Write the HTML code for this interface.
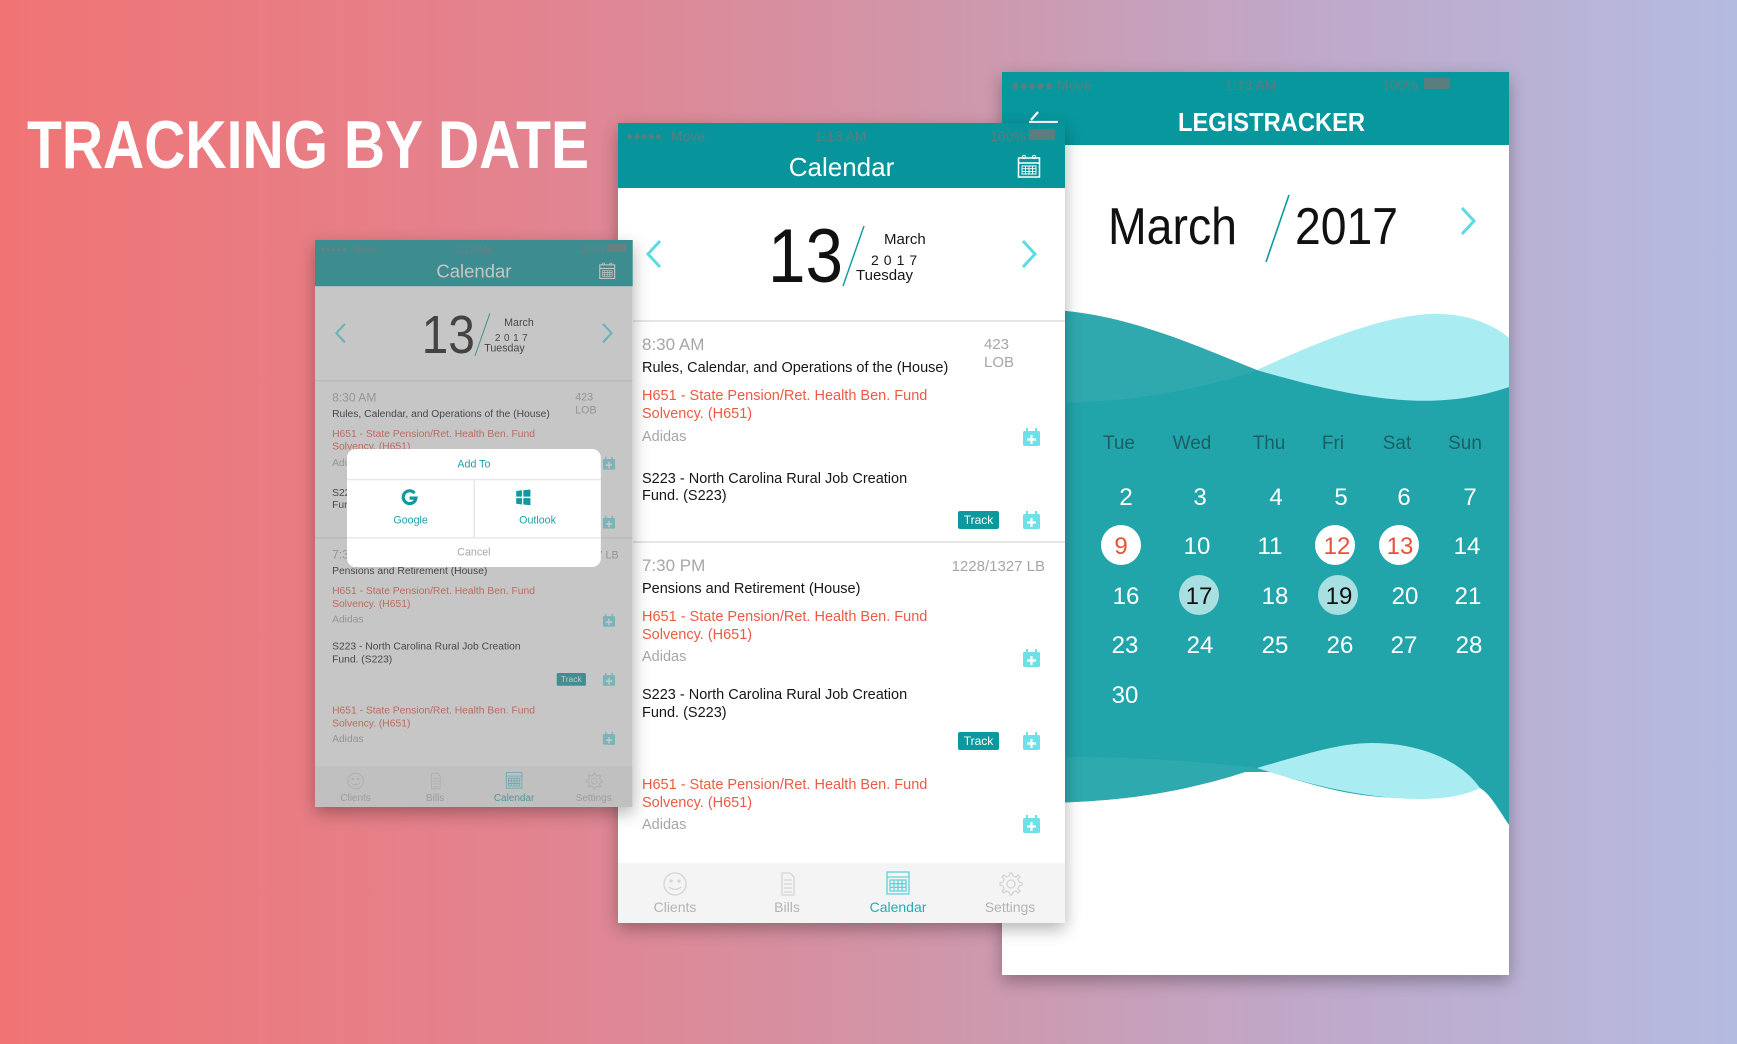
<!DOCTYPE html>
<html><head><meta charset="utf-8"><style>
*{margin:0;padding:0;box-sizing:border-box}
body{width:1737px;height:1044px;overflow:hidden;position:relative;font-family:"Liberation Sans",sans-serif;background:linear-gradient(90deg,#f07474 0%,#e3838f 30%,#cf97ab 55%,#c0a8c9 75%,#b4bbe0 100%)}
.abs{position:absolute}
.ph{position:absolute;width:447px;height:800px;background:#fff;overflow:hidden}
.sb{position:absolute;left:0;top:0;width:100%;height:24px;font-size:14px;color:#5a7e80;white-space:nowrap}
.sb span{position:absolute;top:5px}
.t{position:absolute;white-space:nowrap;font-size:14.5px;color:#161616}
.g{color:#a6a6a6}
.r{color:#ec5a44}
.trk{position:absolute;width:41px;height:18px;background:#0b999f;border-radius:2px;color:#fff;font-size:12px;text-align:center;line-height:18px}
.tab{position:absolute;top:776px;font-size:14px;color:#b4b4b4;text-align:center;width:100px}
</style></head><body>

<svg class="abs" style="left:0;top:0" width="640" height="200"><text x="27" y="168" font-family="Liberation Sans" font-weight="bold" font-size="68" fill="#fff" textLength="562" lengthAdjust="spacingAndGlyphs">TRACKING BY DATE</text></svg>

<!-- RIGHT PHONE -->
<div class="abs" style="left:1002px;top:72px;width:507px;height:903px;background:#fff;box-shadow:0 6px 16px rgba(0,0,0,.3);overflow:hidden">
 <div class="abs" style="left:0;top:0;width:507px;height:73px;background:#07979d"></div>
 <div class="sb"><span style="left:9px">●●●●● Move</span><span style="left:223px">1:13 AM</span><span style="left:380px">100%</span><span style="left:422px;top:6px;width:26px;height:11px;background:#5a7e80;border-radius:2px"></span></div>
 <svg class="abs" style="left:26px;top:38px" width="32" height="16"><path d="M10 2 L3 10 M1 12 H30" stroke="#fff" stroke-width="2.2" fill="none"/></svg>
 <svg class="abs" style="left:0;top:0" width="507" height="903">
  <text x="176" y="59" font-family="Liberation Sans" font-weight="bold" font-size="26" fill="#fff" textLength="187" lengthAdjust="spacingAndGlyphs">LEGISTRACKER</text>
  <text x="106" y="172" font-family="Liberation Sans" font-size="52" fill="#111" textLength="129" lengthAdjust="spacingAndGlyphs">March</text>
  <text x="293" y="172" font-family="Liberation Sans" font-size="52" fill="#111" textLength="103" lengthAdjust="spacingAndGlyphs">2017</text>
  <line x1="287" y1="123" x2="264" y2="190" stroke="#0a9aa0" stroke-width="1.6"/>
  <path d="M460 136 L472 149 L460 162" stroke="#5cdbe3" stroke-width="3" fill="none"/>
  <path d="M0 238 C100 230 180 268 255 298 C340 330 420 348 507 345 L507 700 L0 700Z" fill="#2fa9ae"/>
  <path d="M0 330 C110 336 200 318 255 298 C340 322 430 338 507 315 L507 753 C495 735 488 722 478 716 C380 740 320 715 255 696 C200 715 120 735 0 730Z" fill="#21a5aa"/>
  <path d="M255 298 C320 268 390 240 440 242 C470 243 495 255 507 266 L507 315 C440 338 370 332 255 298Z" fill="#a9ecf1"/>
  <path d="M0 688 C100 680 200 690 255 696 C200 715 120 735 0 730Z" fill="#2ea9ae"/>
  <path d="M255 696 C310 680 340 671 370 671 C420 671 460 690 478 716 C440 735 360 730 255 696Z" fill="#a9ecf1"/>
  <g font-family="Liberation Sans" font-size="19" fill="#1b5f63" text-anchor="middle">
   <text x="117" y="377">Tue</text><text x="190" y="377">Wed</text><text x="267" y="377">Thu</text><text x="331" y="377">Fri</text><text x="395" y="377">Sat</text><text x="463" y="377">Sun</text>
  </g>
  <circle cx="119" cy="473" r="20" fill="#fff"/><circle cx="333" cy="473" r="20" fill="#fff"/><circle cx="397" cy="473" r="20" fill="#fff"/>
  <circle cx="197" cy="523" r="20" fill="#a8dfe0"/><circle cx="336" cy="523" r="20" fill="#a8dfe0"/>
  <g font-family="Liberation Sans" font-size="24" fill="#fff" text-anchor="middle">
   <text x="124" y="433">2</text><text x="198" y="433">3</text><text x="274" y="433">4</text><text x="339" y="433">5</text><text x="402" y="433">6</text><text x="468" y="433">7</text>
   <text x="119" y="482" fill="#e8513a">9</text><text x="195" y="482">10</text><text x="268" y="482">11</text><text x="335" y="482" fill="#e8513a">12</text><text x="398" y="482" fill="#e8513a">13</text><text x="465" y="482">14</text>
   <text x="124" y="532">16</text><text x="197" y="532" fill="#111">17</text><text x="273" y="532">18</text><text x="337" y="532" fill="#111">19</text><text x="403" y="532">20</text><text x="466" y="532">21</text>
   <text x="123" y="581">23</text><text x="198" y="581">24</text><text x="273" y="581">25</text><text x="338" y="581">26</text><text x="402" y="581">27</text><text x="467" y="581">28</text>
   <text x="123" y="631">30</text>
  </g>
 </svg>
</div>

<!-- MIDDLE PHONE -->
<div class="ph" id="mid" style="left:618px;top:123px;box-shadow:0 6px 16px rgba(0,0,0,.3)">
 <div class="abs" style="left:0;top:0;width:447px;height:65px;background:#07959b"></div>
 <div class="sb"><span style="left:8px;font-size:12px;top:6px">●●●●●</span><span style="left:53px">Move</span><span style="left:197px">1:13 AM</span><span style="left:372px">100%</span><span style="left:411px;top:6px;width:26px;height:11px;background:#5a7e80;border-radius:2px"></span></div>
 <div class="abs" style="left:0;width:447px;top:29px;text-align:center;color:#fff;font-size:26px">Calendar</div>
 <svg class="abs" style="left:399px;top:31px" width="25" height="26"><rect x="1.5" y="4" width="21" height="19" fill="none" stroke="#fff" stroke-width="1.5"/><line x1="1.5" y1="9" x2="22.5" y2="9" stroke="#fff" stroke-width="1.5"/><path d="M5 12h14v8H5z M8.5 12v8 M12 12v8 M15.5 12v8 M5 14.7h14 M5 17.4h14" stroke="#fff" stroke-width=".9" fill="none"/><circle cx="7" cy="3" r="1.6" fill="none" stroke="#fff"/><circle cx="17" cy="3" r="1.6" fill="none" stroke="#fff"/></svg>
 <svg class="abs" style="left:0;top:0" width="447" height="740">
  <path d="M42 118 L30 131 L42 144" stroke="#5cdbe3" stroke-width="3" fill="none"/>
  <path d="M405 118 L417 131 L405 144" stroke="#5cdbe3" stroke-width="3" fill="none"/>
  <line x1="246" y1="103" x2="225" y2="163" stroke="#0a9aa0" stroke-width="1.4"/>
  <text x="150" y="159" font-family="Liberation Sans" font-size="76" fill="#111" textLength="75" lengthAdjust="spacingAndGlyphs">13</text>
  <line x1="0" y1="198" x2="447" y2="198" stroke="#e6e6e6" stroke-width="2"/>
  <line x1="0" y1="419" x2="447" y2="419" stroke="#e6e6e6" stroke-width="2"/>
  <g fill="#6fe0e8">
   <g transform="translate(405,305)"><rect x="0" y="3" width="17" height="15" rx="1.5"/><rect x="3" y="0" width="2" height="5"/><rect x="12" y="0" width="2" height="5"/><path d="M8.5 7v9M4 11.5h9" stroke="#fff" stroke-width="2.2"/></g>
   <g transform="translate(405,388)"><rect x="0" y="3" width="17" height="15" rx="1.5"/><rect x="3" y="0" width="2" height="5"/><rect x="12" y="0" width="2" height="5"/><path d="M8.5 7v9M4 11.5h9" stroke="#fff" stroke-width="2.2"/></g>
   <g transform="translate(405,526)"><rect x="0" y="3" width="17" height="15" rx="1.5"/><rect x="3" y="0" width="2" height="5"/><rect x="12" y="0" width="2" height="5"/><path d="M8.5 7v9M4 11.5h9" stroke="#fff" stroke-width="2.2"/></g>
   <g transform="translate(405,609)"><rect x="0" y="3" width="17" height="15" rx="1.5"/><rect x="3" y="0" width="2" height="5"/><rect x="12" y="0" width="2" height="5"/><path d="M8.5 7v9M4 11.5h9" stroke="#fff" stroke-width="2.2"/></g>
   <g transform="translate(405,692)"><rect x="0" y="3" width="17" height="15" rx="1.5"/><rect x="3" y="0" width="2" height="5"/><rect x="12" y="0" width="2" height="5"/><path d="M8.5 7v9M4 11.5h9" stroke="#fff" stroke-width="2.2"/></g>
  </g>
 </svg>
 <div class="t" style="left:266px;top:108px;font-size:15px">March</div>
 <div class="t" style="left:253px;top:129px;font-size:14px;letter-spacing:5px">2017</div>
 <div class="t" style="left:238px;top:144px;font-size:15px">Tuesday</div>

 <div class="t g" style="left:24px;top:212px;font-size:17px">8:30 AM</div>
 <div class="t g" style="left:366px;top:213px;font-size:15px;line-height:18px">423<br>LOB</div>
 <div class="t" style="left:24px;top:237px">Rules, Calendar, and Operations of the (House)</div>
 <div class="t r" style="left:24px;top:264px;line-height:18px">H651 - State Pension/Ret. Health Ben. Fund<br>Solvency. (H651)</div>
 <div class="t g" style="left:24px;top:306px">Adidas</div>
 <div class="t" style="left:24px;top:348px;line-height:17px">S223 - North Carolina Rural Job Creation<br>Fund. (S223)</div>
 <div class="trk" style="left:340px;top:388px">Track</div>

 <div class="t g" style="left:24px;top:433px;font-size:17px">7:30 PM</div>
 <div class="t g" style="right:20px;top:435px;font-size:15px">1228/1327 LB</div>
 <div class="t" style="left:24px;top:458px">Pensions and Retirement (House)</div>
 <div class="t r" style="left:24px;top:485px;line-height:18px">H651 - State Pension/Ret. Health Ben. Fund<br>Solvency. (H651)</div>
 <div class="t g" style="left:24px;top:526px">Adidas</div>
 <div class="t" style="left:24px;top:563px;line-height:18px">S223 - North Carolina Rural Job Creation<br>Fund. (S223)</div>
 <div class="trk" style="left:340px;top:609px">Track</div>
 <div class="t r" style="left:24px;top:653px;line-height:18px">H651 - State Pension/Ret. Health Ben. Fund<br>Solvency. (H651)</div>
 <div class="t g" style="left:24px;top:694px">Adidas</div>

 <div class="abs" style="left:0;top:740px;width:447px;height:60px;background:#f4f4f4"></div>
 <svg class="abs" style="left:0;top:740px" width="447" height="40">
  <g fill="none" stroke="#d4d4d4" stroke-width="1.3">
   <circle cx="57" cy="21" r="11"/><circle cx="53" cy="18" r="1" fill="#d4d4d4"/><circle cx="61" cy="18" r="1" fill="#d4d4d4"/><path d="M51 24 Q57 29 63 24"/>
   <path d="M164 10h8l4 4v18h-12z M166 17h8 M166 21h8 M166 25h8 M166 29h8"/>
   <path d="M392 10l2 0 1 3 3 1 2-2 2 2-2 2 1 3 3 1v2l-3 1-1 3 2 2-2 2-2-2-3 1-1 3h-2l-1-3-3-1-2 2-2-2 2-2-1-3-3-1v-2l3-1 1-3-2-2 2-2 2 2 3-1z"/><circle cx="393" cy="21" r="4"/>
  </g>
  <g fill="none" stroke="#5fd3dc" stroke-width="1.3"><rect x="269" y="9" width="22" height="22"/><line x1="269" y1="14" x2="291" y2="14"/><path d="M272 17h16v11h-16z M276 17v11 M280 17v11 M284 17v11 M272 20.7h16 M272 24.4h16"/></g>
 </svg>
 <div class="tab" style="left:7px">Clients</div>
 <div class="tab" style="left:119px">Bills</div>
 <div class="tab" style="left:230px;color:#2aa9b0">Calendar</div>
 <div class="tab" style="left:342px">Settings</div>
</div>

<!-- LEFT PHONE (scaled copy with overlay) -->
<div class="abs" style="left:315px;top:240px;width:318px;height:567px;box-shadow:0 6px 16px rgba(0,0,0,.3);overflow:hidden">
 <div id="lp" class="ph" style="left:0;top:0;transform:scale(0.711);transform-origin:0 0">
 </div>
</div>
<script>
var m=document.getElementById('mid'),l=document.getElementById('lp');
l.innerHTML=m.innerHTML+'<div class="abs" style="left:0;top:0;width:447px;height:800px;background:rgba(128,128,128,.45)"></div>'+
'<div class="abs" style="left:45px;top:294px;width:357px;height:166px;background:#fff;border-radius:12px;overflow:hidden">'+
'<div class="abs" style="left:0;top:0;width:357px;height:44px;text-align:center;line-height:44px;font-size:15px;color:#1aa3aa;border-bottom:2px solid #e6e6e6">Add To</div>'+
'<div class="abs" style="left:178px;top:44px;width:2px;height:80px;background:#e6e6e6"></div>'+
'<svg class="abs" style="left:76px;top:56px" width="24" height="24"><path d="M19 6 A9 9 0 1 0 21 13 H12" fill="none" stroke="#12999f" stroke-width="4.5"/></svg>'+
'<svg class="abs" style="left:236px;top:56px" width="24" height="24"><path d="M2 3l8-1v9H2zM12 2l10-1v10H12zM2 13h8v9l-8-1zM12 13h10v10l-10-1z" fill="#12999f"/></svg>'+
'<div class="abs" style="left:0;top:92px;width:179px;text-align:center;font-size:15px;color:#1aa3aa">Google</div>'+
'<div class="abs" style="left:179px;top:92px;width:178px;text-align:center;font-size:15px;color:#1aa3aa">Outlook</div>'+
'<div class="abs" style="left:0;top:124px;width:357px;height:42px;border-top:2px solid #e6e6e6;text-align:center;line-height:40px;font-size:15px;color:#a8a8a8">Cancel</div></div>';
l.style.boxShadow='none';
</script>
</body></html>
